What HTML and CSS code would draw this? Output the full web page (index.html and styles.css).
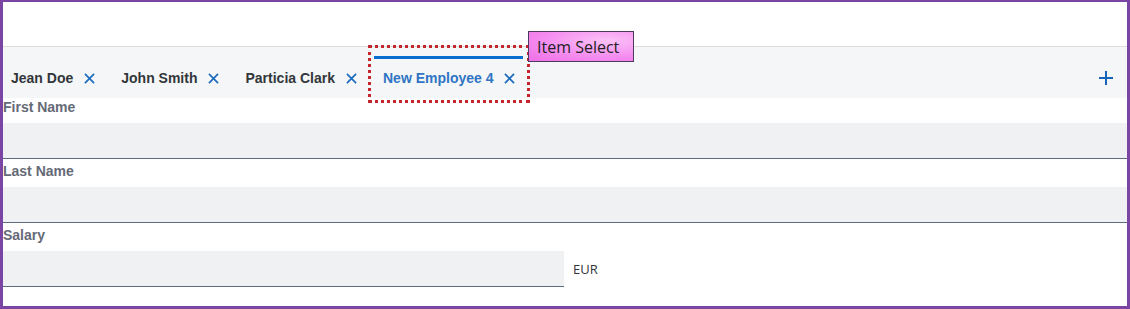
FILE: index.html
```html
<!DOCTYPE html>
<html>
<head>
<meta charset="utf-8">
<link rel="stylesheet" href="styles.css">
</head>
<body>
<div class="frame">
  <div class="top-space"></div>
  <div class="tabbar">
    <div class="tab"><span class="tab-text">Jean Doe</span><svg class="close" viewBox="0 0 12 12"><path d="M1 1L11 11M11 1L1 11"/></svg></div>
    <div class="tab"><span class="tab-text">John Smith</span><svg class="close" viewBox="0 0 12 12"><path d="M1 1L11 11M11 1L1 11"/></svg></div>
    <div class="tab"><span class="tab-text">Particia Clark</span><svg class="close" viewBox="0 0 12 12"><path d="M1 1L11 11M11 1L1 11"/></svg></div>
    <div class="tab selected"><span class="tab-text">New Employee 4</span><svg class="close" viewBox="0 0 12 12"><path d="M1 1L11 11M11 1L1 11"/></svg></div>
    <div class="spacer"></div>
    <svg class="plus" viewBox="0 0 14 14"><path d="M7 0V14M0 7H14"/></svg>
    <div class="highlight"></div>
    <div class="tooltip">Item Select</div>
  </div>
  <div class="form">
    <div class="field">
      <div class="label">First Name</div>
      <div class="input"></div>
    </div>
    <div class="field">
      <div class="label">Last Name</div>
      <div class="input"></div>
    </div>
    <div class="field">
      <div class="label">Salary</div>
      <div class="row">
        <div class="input short"></div>
        <span class="unit">EUR</span>
      </div>
    </div>
  </div>
</div>
</body>
</html>
```

FILE: styles.css
```css
html, body {
  margin: 0;
  padding: 0;
  background: #ffffff;
}
.frame {
  box-sizing: border-box;
  width: 1130px;
  height: 309px;
  border: 3px solid #7b45a3;
  border-top-width: 2px;
  background: #ffffff;
  font-family: "Liberation Sans", Arial, sans-serif;
  overflow: hidden;
}
.top-space {
  height: 44px;
}
.tabbar {
  position: relative;
  display: flex;
  align-items: flex-end;
  height: 52px;
  box-sizing: border-box;
  border-top: 1px solid #dcdcdc;
  background: #f5f6f7;
}
.tab {
  display: flex;
  align-items: center;
  gap: 11px;
  height: 42px;
  box-sizing: border-box;
  border-top: 3px solid transparent;
  padding: 0 8px 1px 8px;
  margin-right: 10px;
  font-size: 14px;
  font-weight: bold;
  color: #32363a;
}
.tab.selected {
  border-top-color: #0a6ed1;
  color: #2f75c4;
  margin-left: -1px;
  padding-left: 9px;
}
.close {
  width: 11px;
  height: 11px;
  fill: none;
  stroke: #1a6bbf;
  stroke-width: 1.8;
}
.spacer {
  flex: 1;
}
.plus {
  width: 14px;
  height: 14px;
  fill: none;
  stroke: #1666b8;
  stroke-width: 2;
  margin: 0 14px 13px 0;
}
.highlight {
  position: absolute;
  left: 365px;
  top: -2px;
  width: 156px;
  height: 52px;
  border: 3px dotted #c3262c;
}
.tooltip {
  position: absolute;
  left: 525px;
  top: -16px;
  width: 106px;
  height: 31px;
  box-sizing: border-box;
  border: 1px solid #4d3a5c;
  background: radial-gradient(ellipse at 75% 30%, #fbc2f7 0%, #f58ef0 55%, #ee6ee6 100%);
  font-family: "Open Sans", sans-serif;
  font-size: 16px;
  color: #222222;
  line-height: 30px;
  padding-left: 8px;
}
.form {
  display: flex;
  flex-direction: column;
  gap: 3px;
}
.label {
  font-size: 14px;
  font-weight: bold;
  color: #656a76;
  line-height: 18px;
  margin-bottom: 7px;
}
.input {
  height: 36px;
  box-sizing: border-box;
  background: #eff1f2;
  border-bottom: 1px solid #5b6d80;
}
.row {
  display: flex;
  align-items: center;
}
.input.short {
  width: 561px;
}
.unit {
  margin-left: 9px;
  font-family: "Open Sans", sans-serif;
  font-size: 13px;
  color: #32363a;
}
```
